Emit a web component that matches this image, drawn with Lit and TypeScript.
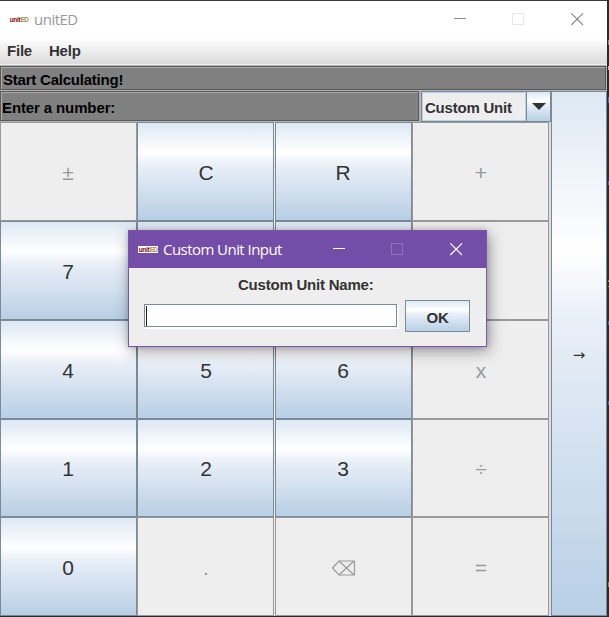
import { LitElement, html, css } from "lit";
import { customElement, property } from "lit/decorators.js";

type Key = { label: string; off?: boolean; icon?: boolean };

const KEYS: Key[] = [
  { label: "±", off: true }, { label: "C" }, { label: "R" }, { label: "+", off: true },
  { label: "7" }, { label: "8" }, { label: "9" }, { label: "-", off: true },
  { label: "4" }, { label: "5" }, { label: "6" }, { label: "x", off: true },
  { label: "1" }, { label: "2" }, { label: "3" }, { label: "÷", off: true },
  { label: "0" }, { label: ".", off: true }, { label: "⌫", off: true, icon: true }, { label: "=", off: true },
];

@customElement("window-bar")
class WindowBar extends LitElement {
  @property() caption = "";

  static styles = css`
    :host { display: flex; align-items: center; box-sizing: border-box; }
    .logo { display: flex; align-items: center; justify-content: center; width: 20px; height: 7px; flex: none;
      background: #fff; font: bold 6.5px/7px "Liberation Sans", sans-serif; letter-spacing: -0.3px; color: #7a0c10; }
    .logo span { color: #a88f48; font-weight: bold; letter-spacing: -0.7px; margin-left: 0.3px; }
    .caption { margin-left: 5px; font: 400 15px/20px "Open Sans", "Noto Sans", sans-serif; white-space: nowrap;
      letter-spacing: var(--track, 0px); flex: 1; position: relative; top: -1px; }
    svg { display: block; flex: none; }
  `;

  render() {
    return html`
      <div class="logo">unit<span>ED</span></div>
      <div class="caption">${this.caption}</div>
      <svg width="130" height="13" viewBox="0 0 130 13" fill="none" shape-rendering="crispEdges">
        <path d="M0 5.5H12" stroke="var(--ctl)" />
        <rect x="58.5" y="0.5" width="11" height="11" stroke="var(--ctl-off)" />
        <path d="M117.3 0.3L129 12M129 0.3L117.3 12" stroke="var(--ctl)" stroke-width="1.1" shape-rendering="auto" />
      </svg>`;
  }
}

@customElement("app-root")
class AppRoot extends LitElement {
  static styles = css`
    :host { display: block; position: relative; width: 609px; height: 617px; overflow: hidden; background: #2b2b2d;
      font: bold 15px/18px "Liberation Sans", sans-serif; letter-spacing: -0.22px; color: #333; }
    * { box-sizing: border-box; }
    .window { display: flex; flex-direction: column; width: 607px; height: 616px; border-top: 1px solid #3b3a3c; background: #eee; }
    .title { height: 37px; flex: none; padding: 0 23px 0 9px; background: #fff; color: #999;
      --ctl: #8c8c8c; --ctl-off: #e8e8e8; --track: -0.5px; }
    .menu { height: 27px; flex: none; display: flex; gap: 17px; padding: 4px 7px 0; background: linear-gradient(#fff, #dadada);
      border-bottom: 1px solid #eee; }
    .status, .entry { background: #808080; color: #000; border: 1px solid #585858; box-shadow: inset 1px 1px #aaa; flex: none; white-space: nowrap; }
    .strip { height: 26px; flex: none; padding: 1px 1px 1px 0; background: #b4b4b4; }
    .status { height: 24px; padding: 4px 0 0 2px; }
    .body { display: grid; grid-template-columns: 549px 56px; column-gap: 2px; height: 525px; background: #ddd; }
    .left { display: flex; flex-direction: column; background: #eee; }
    .top { display: flex; width: 551px; height: 31px; background: #b4b4b4; flex: none; }
    .entry { width: 419px; height: 30px; padding: 7px 0 0 1px; letter-spacing: -0.12px; }
    .combo { margin-left: 2px; display: flex; width: 130px; height: 31px; border: 1px solid #7a8a99; background: #eee; flex: none; }
    .value { width: 104px; padding: 6px 0 0 2px; border: 1px solid #b8cfe5; white-space: nowrap; }
    .arrow { width: 24px; flex: 1; display: flex; align-items: center; justify-content: center; border-left: 1px solid #7a8a99; }
    .shiny { background: linear-gradient(#dde8f3 0%, #fff 30%, #e7eef7 45%, #b8cfe5 100%); }
    .keys { flex: 1; display: grid; grid-template-columns: 137px 137px 137px 137px; column-gap: 0;
      grid-template-rows: 99px 99px 99px 98px 99px; }
    .key { display: flex; align-items: center; justify-content: center; border: 1px solid #7a8a99; font-weight: normal; font-size: 21px;
      letter-spacing: 0; padding: 2px 1px 0 0; }
    .key:nth-child(4n + 2), .key:nth-child(4n) { padding: 2px 0 0 1px; }
    .key:nth-child(4n + 3), .key:nth-child(4n) { margin-left: 1px; margin-right: -1px; }
    .off { background: #eee; border-color: #999; color: #999; }
    .next { display: flex; align-items: center; justify-content: center; border: 1px solid #7a8a99; font: 15px/18px "DejaVu Sans", sans-serif; padding-top: 2px; }
    .bits { position: absolute; left: 608px; top: 0; }
    .dialog { position: absolute; left: 128px; top: 230px; width: 359px; height: 117px; border: 1px solid #7e52ae; background: #eee;
      box-shadow: 2px 4px 14px rgba(0, 0, 0, 0.38), 0 0 5px rgba(0, 0, 0, 0.16); }
    .dtitle { height: 37px; padding: 0 23px 0 9px; background: #744da9; color: #fff; --ctl: #fff; --ctl-off: #956fc1; --track: -0.55px; }
    .prompt { margin: 8px 0 0 109px; white-space: nowrap; }
    .row { display: flex; margin: 6px 0 0 15px; }
    .field { width: 253px; height: 23px; margin: 4px 8px 0 0; border: 1px solid #7a8a99; background: #fff; padding: 1px; box-shadow: 1px 1px #fff, 2px 2px #fff; }
    .caret { width: 1px; height: 20px; background: #222; }
    .ok { display: flex; align-items: center; justify-content: center; width: 65px; height: 32px; border: 1px solid #7a8a99; padding-top: 4px; }
  `;

  render() {
    return html`
      <div class="window">
        <window-bar class="title" caption="unitED"></window-bar>
        <div class="menu"><span>File</span><span>Help</span></div>
        <div class="strip"><div class="status">Start Calculating!</div></div>
        <div class="body">
          <div class="left">
            <div class="top">
              <div class="entry">Enter a number:</div>
              <div class="combo">
                <div class="value">Custom Unit</div>
                <div class="arrow shiny">
                  <svg width="14" height="7" viewBox="0 0 14 7"><path d="M0 0H14L7 7Z" fill="#333" /></svg>
                </div>
              </div>
            </div>
            <div class="keys">
              ${KEYS.map((k) => html`<div class="key ${k.off ? "off" : "shiny"}">${k.icon
                ? html`<svg width="25" height="16" viewBox="0 0 25 16" fill="none" stroke="#999" stroke-width="1.2">
                    <path d="M1.5 8L8 1H23.5V15H8ZM8.5 1.5L22.5 14.5M22.5 1.5L8.5 14.5" /></svg>`
                : k.label}</div>`)}
            </div>
          </div>
          <div class="next shiny">→</div>
        </div>
      </div>
      <svg class="bits" width="1" height="617" viewBox="0 0 1 617" shape-rendering="crispEdges">
        <path d="M0 40h1v5H0z" fill="#888" /><path d="M0 66h1v4H0z" fill="#d9b872" />
        <path d="M0 97h1v6H0zM0 181h1v4H0zM0 321h1v4H0zM0 401h1v4H0z" fill="#2f74c0" />
        <path d="M0 280h1v2H0zM0 286h1v1H0zM0 582h1v5H0z" fill="#4fae26" />
      </svg>
      <div class="dialog">
        <window-bar class="dtitle" caption="Custom Unit Input"></window-bar>
        <div class="prompt">Custom Unit Name:</div>
        <div class="row">
          <div class="field"><div class="caret"></div></div>
          <div class="ok shiny">OK</div>
        </div>
      </div>`;
  }
}
